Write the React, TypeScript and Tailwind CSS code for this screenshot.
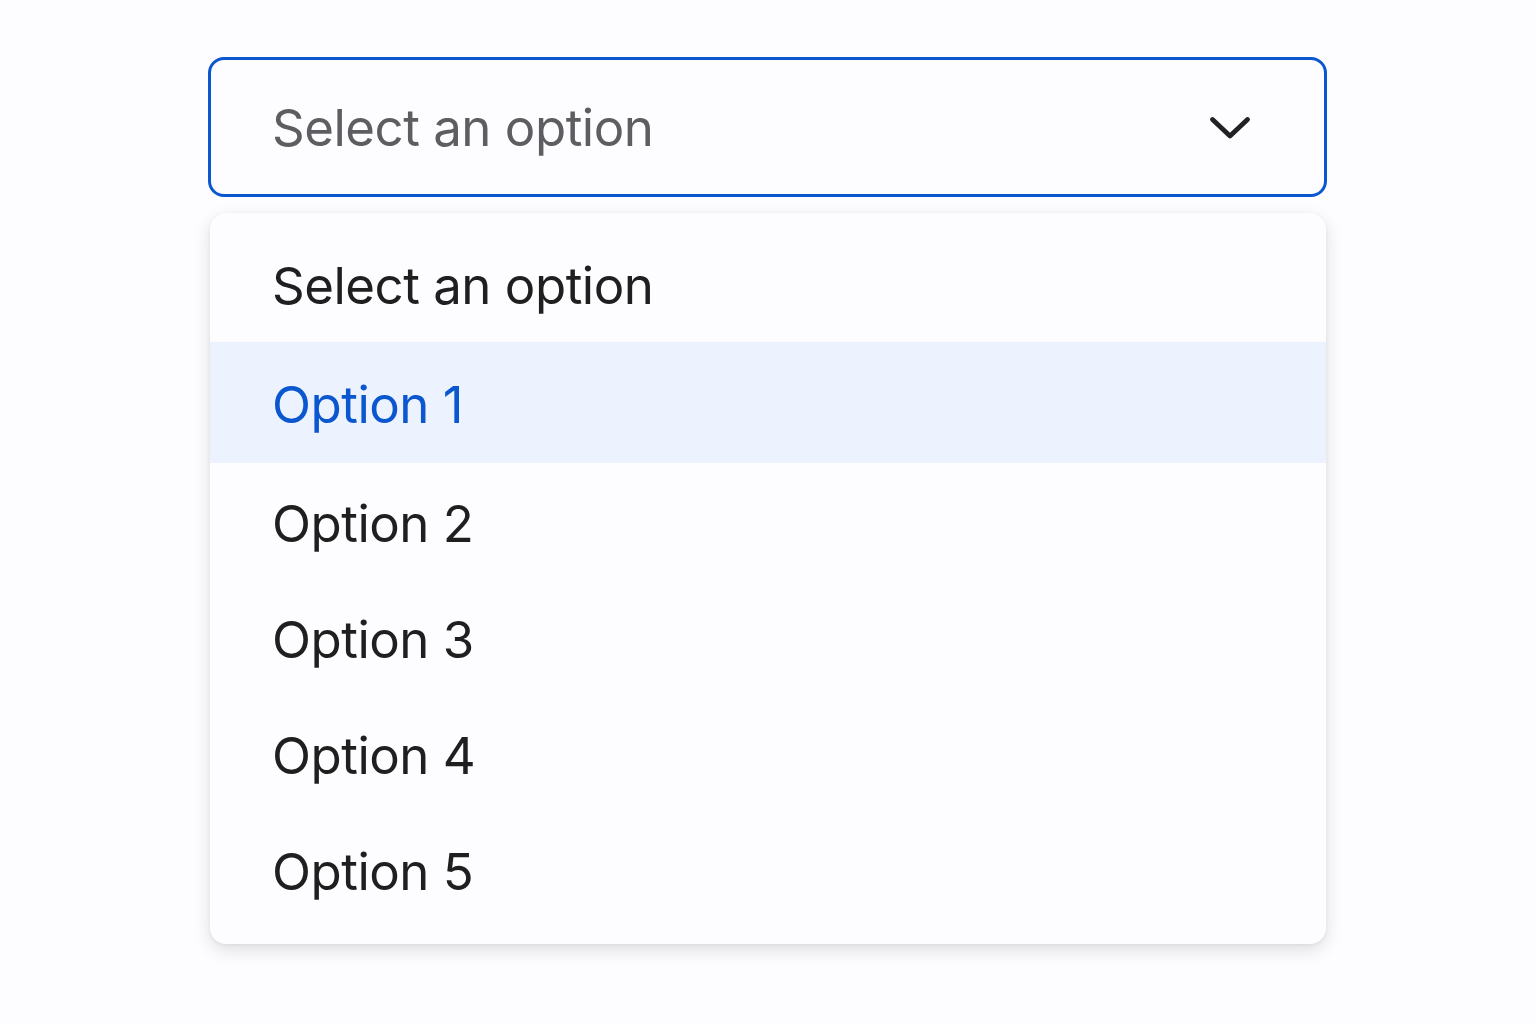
import React from "react";

const options = ["Option 1", "Option 2", "Option 3", "Option 4", "Option 5"];

export default function App() {
  return (
    <div
      className="min-h-[1024px] w-full bg-[#fdfcfe] pt-[57px]"
      style={{ fontFamily: 'Inter, "Noto Sans", sans-serif' }}
    >
      <div className="ml-[208px] w-[1119px]">
        <div className="flex h-[140px] items-center justify-between rounded-[16px] border-[3px] border-[#0b57d0] bg-[#fdfcfe] pl-[61px] pr-[72px]">
          <span className="text-[51px] leading-none tracking-[-0.5px] text-[#5e5e62]">Select an option</span>
          <svg width="44" height="28" viewBox="0 0 44 28" fill="none" className="mt-[1px]">
            <path d="M4.5 5.5 L22 22 L39.5 5.5" stroke="#222222" strokeWidth="4.8" strokeLinecap="round" strokeLinejoin="round" />
          </svg>
        </div>
        <div className="ml-[2px] mt-[16px] w-[1116px] overflow-hidden rounded-[16px] bg-[#fdfcfe] pt-[12px] pb-[17px] shadow-[0_6px_18px_rgba(0,0,0,0.12),0_1px_4px_rgba(0,0,0,0.06)]">
          <div className="flex h-[117px] items-center pl-[62px] pt-[6px] text-[51px] tracking-[-0.5px] text-[#1f1f1f]">Select an option</div>
          {options.map((o, i) => (
            <div
              key={o}
              className={
                i === 0
                  ? "flex h-[121px] items-center bg-[#ecf2fe] pl-[62px] pt-[6px] text-[51px] tracking-[-0.5px] text-[#0b57d0]"
                  : "flex h-[116px] items-center pl-[62px] pt-[6px] text-[51px] tracking-[-0.5px] text-[#1f1f1f]"
              }
            >
              {o}
            </div>
          ))}
        </div>
      </div>
    </div>
  );
}
